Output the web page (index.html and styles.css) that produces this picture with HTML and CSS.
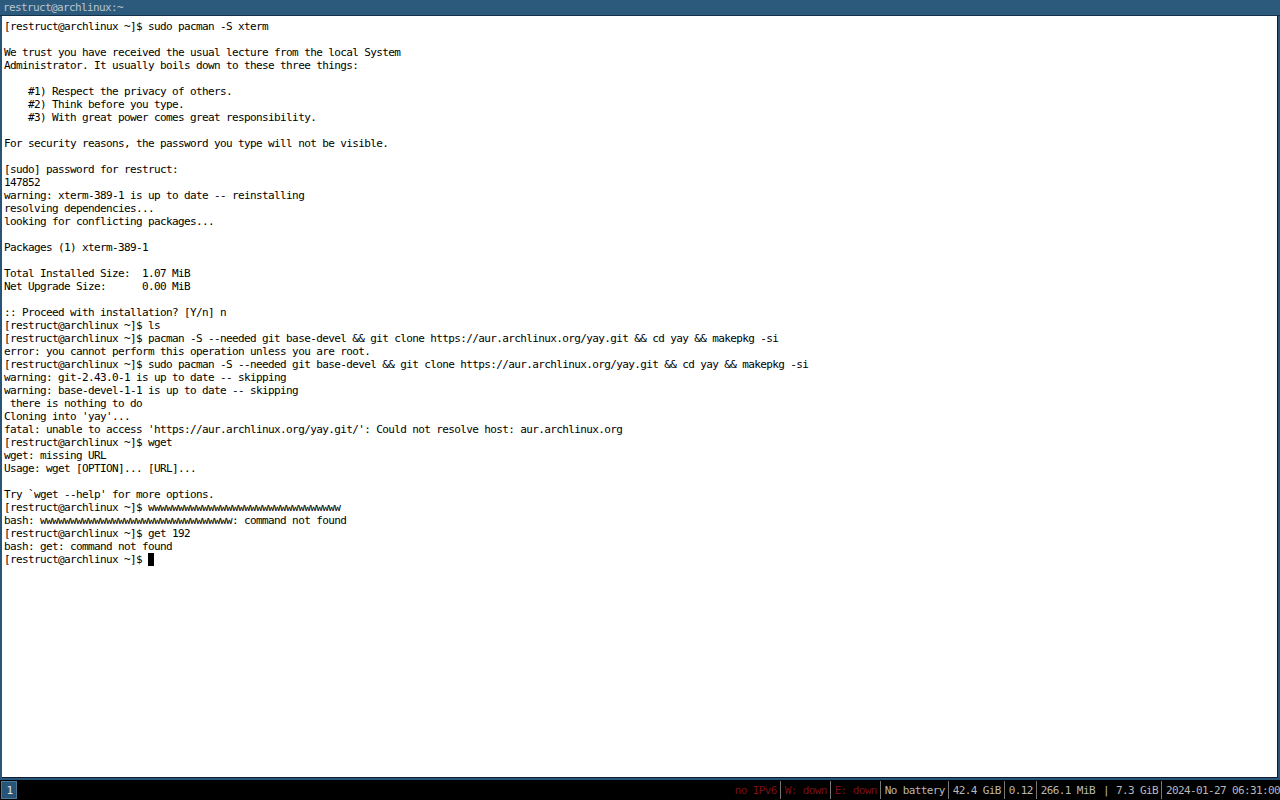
FILE: index.html
```html
<!DOCTYPE html>
<html lang="en">
<head>
    <meta charset="UTF-8">
    <meta name="viewport" content="width=device-width, initial-scale=1.0">
    <title>restruct@archlinux:~</title>
    <link rel="stylesheet" href="styles.css">
</head>
<body>
    <div class="window">
        <div class="title">restruct@archlinux:~</div>
        <div class="term">
<pre class="output">[restruct@archlinux ~]$ sudo pacman -S xterm

We trust you have received the usual lecture from the local System
Administrator. It usually boils down to these three things:

    #1) Respect the privacy of others.
    #2) Think before you type.
    #3) With great power comes great responsibility.

For security reasons, the password you type will not be visible.

[sudo] password for restruct: 
147852
warning: xterm-389-1 is up to date -- reinstalling
resolving dependencies...
looking for conflicting packages...

Packages (1) xterm-389-1

Total Installed Size:  1.07 MiB
Net Upgrade Size:      0.00 MiB

:: Proceed with installation? [Y/n] n
[restruct@archlinux ~]$ ls
[restruct@archlinux ~]$ pacman -S --needed git base-devel &amp;&amp; git clone https://aur.archlinux.org/yay.git &amp;&amp; cd yay &amp;&amp; makepkg -si
error: you cannot perform this operation unless you are root.
[restruct@archlinux ~]$ sudo pacman -S --needed git base-devel &amp;&amp; git clone https://aur.archlinux.org/yay.git &amp;&amp; cd yay &amp;&amp; makepkg -si
warning: git-2.43.0-1 is up to date -- skipping
warning: base-devel-1-1 is up to date -- skipping
 there is nothing to do
Cloning into 'yay'...
fatal: unable to access 'https://aur.archlinux.org/yay.git/': Could not resolve host: aur.archlinux.org
[restruct@archlinux ~]$ wget
wget: missing URL
Usage: wget [OPTION]... [URL]...

Try `wget --help' for more options.
[restruct@archlinux ~]$ wwwwwwwwwwwwwwwwwwwwwwwwwwwwwwww
bash: wwwwwwwwwwwwwwwwwwwwwwwwwwwwwwww: command not found
[restruct@archlinux ~]$ get 192
bash: get: command not found
[restruct@archlinux ~]$ <span class="cursor"> </span></pre>
        </div>
    </div>

    <div class="bar">
        <div class="workspace">1</div>
        <div class="status">
            <span class="item bad">no IPv6</span>
            <span class="item bad">W: down</span>
            <span class="item bad">E: down</span>
            <span class="item">No battery</span>
            <span class="item">42.4 GiB</span>
            <span class="item">0.12</span>
            <span class="item">266.1 MiB <span class="pipe">|</span> 7.3 GiB</span>
            <span class="item">2024-01-27 06:31:00</span>
        </div>
    </div>
</body>
</html>
```

FILE: styles.css
```css
html, body {
    margin: 0;
    height: 100%;
}

body {
    display: flex;
    flex-direction: column;
    width: 1280px;
    height: 800px;
    overflow: hidden;
    background-color: #000;
    font-family: "DejaVu Sans Mono", "Liberation Mono", monospace;
    font-size: 11px;
    letter-spacing: -0.62px;
}

.window {
    flex: 1;
    display: flex;
    flex-direction: column;
    background-color: #285577;
    min-height: 0;
}

.title {
    height: 15px;
    line-height: 15px;
    padding-left: 3px;
    color: #b9c6d2;
    background-color: #2c5a7c;
    border-bottom: 1px solid #16324a;
}

.term {
    flex: 1;
    margin: 0 2px 2px 2px;
    border-right: 1px solid #0d1f30;
    border-bottom: 1px solid #0d1f30;
    background-color: #fff;
    padding: 4px 2px 0 2px;
    overflow: hidden;
}

.output {
    margin: 0;
    font: inherit;
    line-height: 13px;
    color: #000;
    white-space: pre;
}

.cursor {
    background-color: #000;
}

.bar {
    height: 20px;
    display: flex;
    align-items: center;
    background-color: #000;
    color: #b8b8b8;
}

.workspace {
    width: 13px;
    height: 16px;
    line-height: 17px;
    margin-left: 1px;
    padding-left: 1px;
    background-color: #285577;
    border: 1px solid #4c7899;
    color: #dfe6ee;
    text-align: center;
}

.status {
    flex: 1;
    display: flex;
    justify-content: flex-end;
}

.item {
    padding: 2px 3px 0 4px;
    border-left: 1px solid #777;
    line-height: 16px;
}

.item:first-child {
    border-left: none;
}

.item:last-child {
    padding-right: 0;
}

.pipe {
    padding: 0 1px 0 2px;
}

.bad {
    color: #76111b;
}
```
